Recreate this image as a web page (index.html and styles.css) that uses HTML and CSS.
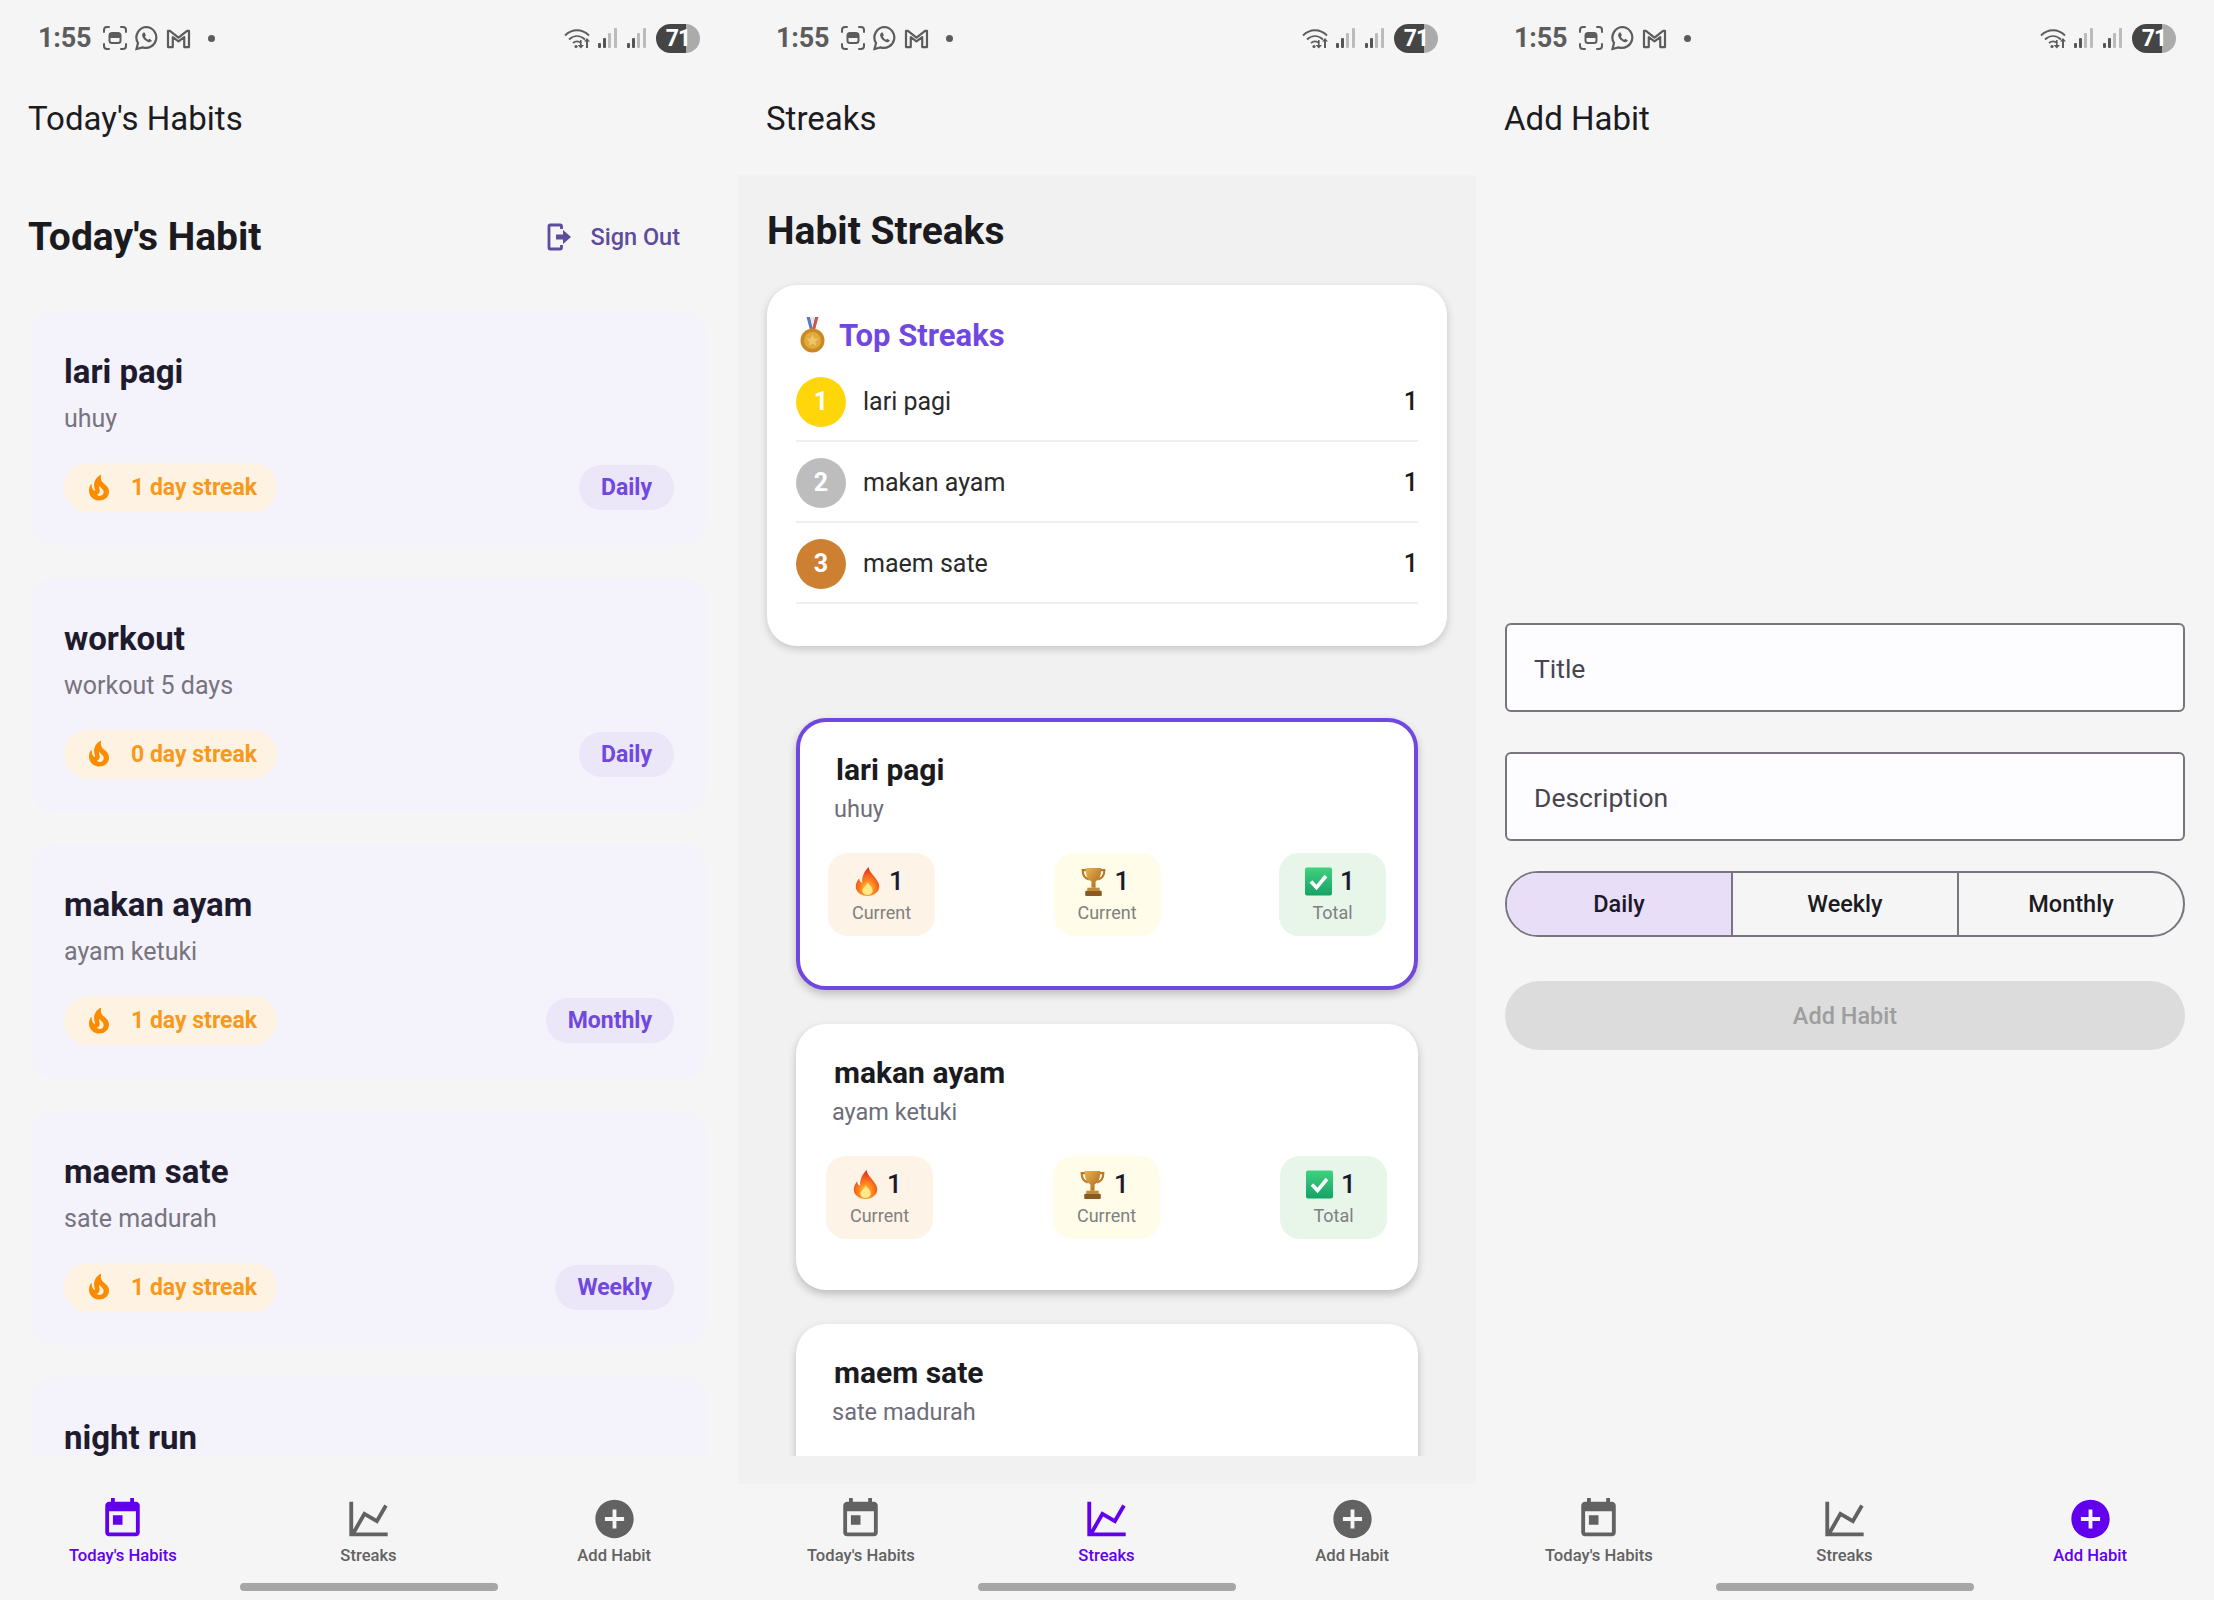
FILE: index.html
```html
<!DOCTYPE html>
<html lang="en">
<head>
<meta charset="utf-8">
<title>Habit tracker</title>
<link rel="stylesheet" href="styles.css">
</head>
<body>
<svg class="defs" width="0" height="0" aria-hidden="true">
  <defs>
    <radialGradient id="fireG" cx="50%" cy="75%" r="70%">
      <stop offset="0" stop-color="#ffd84a"/><stop offset=".4" stop-color="#ff8a1f"/><stop offset="1" stop-color="#e42f1e"/>
    </radialGradient>
    <linearGradient id="goldG" x1="0" x2="1" y1="0" y2="1">
      <stop offset="0" stop-color="#e9b44f"/><stop offset="1" stop-color="#a8641c"/>
    </linearGradient>
    <linearGradient id="checkG" x1="0" x2="0" y1="0" y2="1">
      <stop offset="0" stop-color="#3fd27f"/><stop offset="1" stop-color="#16a266"/>
    </linearGradient>
    <symbol id="i-today" viewBox="0 0 24 24"><path d="M19 3h-1V1h-2v2H8V1H6v2H5c-1.11 0-1.99.9-1.99 2L3 19c0 1.1.89 2 2 2h14c1.1 0 2-.9 2-2V5c0-1.1-.9-2-2-2zm0 16H5V8h14v11zM7 10h5v5H7z"/></symbol>
    <symbol id="i-chart" viewBox="0 0 24 24"><path d="M16 11.78 20.24 4.45 21.97 5.45 16.74 14.5 10.23 10.75 5.46 19H22V21H2V3H4V17.54L9.5 8 16 11.78Z"/></symbol>
    <symbol id="i-add" viewBox="0 0 24 24"><path d="M12 2C6.48 2 2 6.48 2 12s4.48 10 10 10 10-4.48 10-10S17.52 2 12 2zm5 11h-4v4h-2v-4H7v-2h4V7h2v4h4v2z"/></symbol>
    <symbol id="i-flame" viewBox="0 0 24 24"><path d="M19.48 12.35c-1.57-4.08-7.16-4.3-5.81-10.23.1-.44-.37-.78-.75-.55C9.29 3.71 6.68 8 8.87 13.62c.18.46-.36.89-.75.59-1.81-1.37-2-3.34-1.84-4.75.06-.52-.62-.77-.91-.34C4.69 10.16 4 11.84 4 14.37c.38 5.6 5.11 7.32 6.81 7.54 2.43.31 5.06-.14 6.95-1.87 2.08-1.93 2.84-5.01 1.72-7.69zM10.2 17.38c1.44-.35 2.18-1.39 2.38-2.31.33-1.43-.96-2.83-.09-5.09.33 1.87 3.27 3.04 3.27 5.08.08 2.53-2.66 4.7-5.56 2.32z"/></symbol>
    <symbol id="e-fire" viewBox="0 0 26 28"><path fill="url(#fireG)" d="M14 0c1 5 4 7 7 11 3 4 4 7 3 10-1 4-6 7-11 7S3 25 2 21c-1-4 1-8 3-10 0 2 1 4 3 4C7 10 10 4 14 0z"/><path fill="#ffe98a" d="M13 15c1 2 5 4 5 8 0 2-2 4-5 4s-5-2-5-4c0-3 4-4 5-8z"/></symbol>
    <symbol id="e-trophy" viewBox="0 0 24 28"><path fill="none" stroke="#b9772a" stroke-width="2" d="M5 3H1.5c0 5 2 8 6 9M19 3h3.5c0 5-2 8-6 9"/><path fill="url(#goldG)" d="M4.5 1h15c0 7-1.500 11-5.500 13v6h-4v-6C6 12 4.500 8 4.500 1z"/><rect x="6" y="20" width="12" height="3" fill="#c58a36"/><rect x="4" y="23" width="16" height="5" rx="1" fill="#8b5a20"/></symbol>
    <symbol id="e-check" viewBox="0 0 27 28"><rect width="27" height="28" rx="2" fill="url(#checkG)"/><path d="M6 14l5.500 6L21 8.500" fill="none" stroke="#fff" stroke-width="3.600"/></symbol>
    <symbol id="e-medal" viewBox="0 0 25 36"><path fill="#5a78c8" d="M6.500 0h3.500l3 13h-3z"/><path fill="#c9564f" d="M18.500 0H15l-3 13h3z"/><path fill="#e4e4ea" d="M10.500 0h4L12.500 9z"/><circle cx="12.500" cy="23.500" r="12" fill="#c98a25"/><circle cx="12.500" cy="23.500" r="8.500" fill="#e2a93d"/><path fill="#efc66b" d="M12.500 17.500l1.800 3.800 4.100.5-3 2.900.8 4.100-3.700-2-3.700 2 .8-4.100-3-2.900 4.100-.5z"/></symbol>
    <symbol id="s-shot" viewBox="0 0 24 24"><g fill="none" stroke="currentColor" stroke-width="2" stroke-linecap="round"><path d="M1 6V4a3 3 0 0 1 3-3h2M18 1h2a3 3 0 0 1 3 3v2M23 18v2a3 3 0 0 1-3 3h-2M6 23H4a3 3 0 0 1-3-3v-2"/><rect x="6.500" y="7" width="11" height="10" rx="2.500"/></g><path fill="currentColor" d="M7 7h10v5H7z"/></symbol>
    <symbol id="s-wa" viewBox="0 0 24 26"><path fill="none" stroke="currentColor" stroke-width="2.200" d="M12 2a10.500 10.500 0 0 0-9 16l-1.500 6 6-1.600A10.500 10.500 0 1 0 12 2z"/><path fill="currentColor" d="M8.500 7.500c-1.500 1-1.800 2.800-.9 4.500 1.200 2.400 3 4 5.300 4.900 1.800.6 3.300 0 4-1.500l-2.500-1.700-1.200 1c-1.500-.6-2.700-1.800-3.300-3.200l1-1.200-1.300-2.800z"/></symbol>
    <symbol id="s-gm" viewBox="0 0 26 22"><path fill="none" stroke="currentColor" stroke-width="2.300" stroke-linejoin="round" d="M2 3h2l9 7 9-7h2v17h-5V9.500l-6 4.500-6-4.500V20H2z"/></symbol>
    <symbol id="s-wifi" viewBox="0 0 28 21"><g fill="none" stroke="currentColor" stroke-width="1.800"><path d="M1 7.500C8 0.500 18 0.500 25 7.500M5 11.500C10 7 16 7 21 11.500M9 15c2.500-2 5.500-2 8 0"/></g><circle cx="12" cy="18.500" r="1.600" fill="currentColor"/><path fill="currentColor" d="M16 12h1.600v5H20l-3.200 3.600-3.200-3.600H16zM23 10l3 3.600h-2V20h-2v-6.400h-2z"/></symbol>
    <symbol id="s-sig" viewBox="0 0 19 20"><rect x="0" y="15" width="3" height="5" rx="1" fill="#555"/><rect x="5" y="10" width="3" height="10" rx="1" fill="#555"/><rect x="10" y="5" width="3" height="15" rx="1" fill="#bbb"/><rect x="16" y="0" width="3" height="20" rx="1" fill="#bbb"/></symbol>
  </defs>
</svg>

<main class="phones">

  <section class="phone">
    <header class="status">
      <span class="status-time">1:55</span>
      <svg class="s-ic s-shot"><use href="#s-shot"/></svg>
      <svg class="s-ic s-wa"><use href="#s-wa"/></svg>
      <svg class="s-ic s-gm"><use href="#s-gm"/></svg>
      <span class="status-dot"></span>
      <span class="status-space"></span>
      <svg class="s-ic s-wifi"><use href="#s-wifi"/></svg>
      <svg class="s-ic s-sig"><use href="#s-sig"/></svg>
      <svg class="s-ic s-sig"><use href="#s-sig"/></svg>
      <span class="battery"><span class="battery-num">71</span></span>
    </header>
    <div class="appbar">Today's Habits</div>
    <div class="content content-habits">
      <div class="heading-row">
        <h1 class="heading">Today's Habit</h1>
        <div class="signout">
          <svg class="signout-ic" viewBox="0 0 25 28"><path d="M14.500 6V3a1 1 0 0 0-1-1H3a1 1 0 0 0-1 1v22a1 1 0 0 0 1 1h10.500a1 1 0 0 0 1-1v-3" fill="none" stroke="currentColor" stroke-width="2.800"/><path d="M9 11.500h7V7l8 7-8 7v-4.500H9z" fill="currentColor"/></svg>
          <span>Sign Out</span>
        </div>
      </div>
      <div class="habit-list">
        <article class="habit">
          <div class="habit-title">lari pagi</div>
          <div class="habit-sub">uhuy</div>
          <div class="habit-foot">
            <span class="streak"><svg class="streak-ic"><use href="#i-flame"/></svg>1 day streak</span>
            <span class="freq">Daily</span>
          </div>
        </article>
        <article class="habit">
          <div class="habit-title">workout</div>
          <div class="habit-sub">workout 5 days</div>
          <div class="habit-foot">
            <span class="streak"><svg class="streak-ic"><use href="#i-flame"/></svg>0 day streak</span>
            <span class="freq">Daily</span>
          </div>
        </article>
        <article class="habit">
          <div class="habit-title">makan ayam</div>
          <div class="habit-sub">ayam ketuki</div>
          <div class="habit-foot">
            <span class="streak"><svg class="streak-ic"><use href="#i-flame"/></svg>1 day streak</span>
            <span class="freq">Monthly</span>
          </div>
        </article>
        <article class="habit">
          <div class="habit-title">maem sate</div>
          <div class="habit-sub">sate madurah</div>
          <div class="habit-foot">
            <span class="streak"><svg class="streak-ic"><use href="#i-flame"/></svg>1 day streak</span>
            <span class="freq">Weekly</span>
          </div>
        </article>
        <article class="habit">
          <div class="habit-title">night run</div>
        </article>
      </div>
    </div>
    <nav class="nav">
      <div class="tabs">
        <div class="tab tab-active"><svg class="tab-ic"><use href="#i-today"/></svg><span>Today's Habits</span></div>
        <div class="tab"><svg class="tab-ic"><use href="#i-chart"/></svg><span>Streaks</span></div>
        <div class="tab"><svg class="tab-ic"><use href="#i-add"/></svg><span>Add Habit</span></div>
      </div>
      <div class="homebar"></div>
    </nav>
  </section>

  <section class="phone">
    <header class="status">
      <span class="status-time">1:55</span>
      <svg class="s-ic s-shot"><use href="#s-shot"/></svg>
      <svg class="s-ic s-wa"><use href="#s-wa"/></svg>
      <svg class="s-ic s-gm"><use href="#s-gm"/></svg>
      <span class="status-dot"></span>
      <span class="status-space"></span>
      <svg class="s-ic s-wifi"><use href="#s-wifi"/></svg>
      <svg class="s-ic s-sig"><use href="#s-sig"/></svg>
      <svg class="s-ic s-sig"><use href="#s-sig"/></svg>
      <span class="battery"><span class="battery-num">71</span></span>
    </header>
    <div class="appbar">Streaks</div>
    <div class="content content-streaks">
      <h1 class="heading heading-streaks">Habit Streaks</h1>
      <div class="top-card">
        <div class="top-title"><svg class="medal"><use href="#e-medal"/></svg>Top Streaks</div>
        <div class="rank-row"><span class="rank rank-1">1</span><span class="rank-name">lari pagi</span><span class="rank-val">1</span></div>
        <div class="rank-row"><span class="rank rank-2">2</span><span class="rank-name">makan ayam</span><span class="rank-val">1</span></div>
        <div class="rank-row"><span class="rank rank-3">3</span><span class="rank-name">maem sate</span><span class="rank-val">1</span></div>
      </div>
      <div class="streak-list">
        <article class="scard scard-top">
          <div class="scard-title">lari pagi</div>
          <div class="scard-sub">uhuy</div>
          <div class="stats">
            <div class="stat stat-fire"><div class="stat-top"><svg class="emoji"><use href="#e-fire"/></svg>1</div><div class="stat-label">Current</div></div>
            <div class="stat stat-best"><div class="stat-top"><svg class="emoji"><use href="#e-trophy"/></svg>1</div><div class="stat-label">Current</div></div>
            <div class="stat stat-total"><div class="stat-top"><svg class="emoji"><use href="#e-check"/></svg>1</div><div class="stat-label">Total</div></div>
          </div>
        </article>
        <article class="scard">
          <div class="scard-title">makan ayam</div>
          <div class="scard-sub">ayam ketuki</div>
          <div class="stats">
            <div class="stat stat-fire"><div class="stat-top"><svg class="emoji"><use href="#e-fire"/></svg>1</div><div class="stat-label">Current</div></div>
            <div class="stat stat-best"><div class="stat-top"><svg class="emoji"><use href="#e-trophy"/></svg>1</div><div class="stat-label">Current</div></div>
            <div class="stat stat-total"><div class="stat-top"><svg class="emoji"><use href="#e-check"/></svg>1</div><div class="stat-label">Total</div></div>
          </div>
        </article>
        <article class="scard">
          <div class="scard-title">maem sate</div>
          <div class="scard-sub">sate madurah</div>
        </article>
      </div>
    </div>
    <nav class="nav">
      <div class="tabs">
        <div class="tab"><svg class="tab-ic"><use href="#i-today"/></svg><span>Today's Habits</span></div>
        <div class="tab tab-active"><svg class="tab-ic"><use href="#i-chart"/></svg><span>Streaks</span></div>
        <div class="tab"><svg class="tab-ic"><use href="#i-add"/></svg><span>Add Habit</span></div>
      </div>
      <div class="homebar"></div>
    </nav>
  </section>

  <section class="phone">
    <header class="status">
      <span class="status-time">1:55</span>
      <svg class="s-ic s-shot"><use href="#s-shot"/></svg>
      <svg class="s-ic s-wa"><use href="#s-wa"/></svg>
      <svg class="s-ic s-gm"><use href="#s-gm"/></svg>
      <span class="status-dot"></span>
      <span class="status-space"></span>
      <svg class="s-ic s-wifi"><use href="#s-wifi"/></svg>
      <svg class="s-ic s-sig"><use href="#s-sig"/></svg>
      <svg class="s-ic s-sig"><use href="#s-sig"/></svg>
      <span class="battery"><span class="battery-num">71</span></span>
    </header>
    <div class="appbar">Add Habit</div>
    <div class="content content-form">
      <div class="field">Title</div>
      <div class="field">Description</div>
      <div class="segments">
        <div class="segment segment-on">Daily</div>
        <div class="segment">Weekly</div>
        <div class="segment">Monthly</div>
      </div>
      <div class="submit">Add Habit</div>
    </div>
    <nav class="nav">
      <div class="tabs">
        <div class="tab"><svg class="tab-ic"><use href="#i-today"/></svg><span>Today's Habits</span></div>
        <div class="tab"><svg class="tab-ic"><use href="#i-chart"/></svg><span>Streaks</span></div>
        <div class="tab tab-active"><svg class="tab-ic"><use href="#i-add"/></svg><span>Add Habit</span></div>
      </div>
      <div class="homebar"></div>
    </nav>
  </section>

</main>
</body>
</html>
```

FILE: styles.css
```css
* { box-sizing: border-box; }
html, body { margin: 0; height: 100%; overflow: hidden; }
body { background: #f5f5f5; font-family: Roboto, "Liberation Sans", sans-serif; color: #1c1b1f; }
.defs { position: absolute; }

.phones { display: flex; height: 1600px; width: 2214px; }
.phone { width: 738px; height: 1600px; display: flex; flex-direction: column; background: #f5f5f5; }

/* status bar */
.status { height: 76px; flex: none; display: flex; align-items: center; padding: 0 38px; color: #5c5c5c; }
.status-time { font-size: 27px; font-weight: 700; letter-spacing: -.2px; margin-right: 12px; }
.s-ic { display: block; flex: none; }
.s-shot { width: 24px; height: 24px; margin-right: 8px; }
.s-wa { width: 24px; height: 26px; margin-right: 7px; }
.s-gm { width: 25px; height: 21px; margin-right: 17px; }
.status-dot { width: 7px; height: 7px; border-radius: 50%; background: #5c5c5c; }
.status-space { flex: 1; }
.s-wifi { width: 28px; height: 21px; margin-right: 6px; }
.s-sig { width: 19px; height: 20px; margin-right: 10px; }
.battery { width: 44px; height: 29px; border-radius: 15px; background: linear-gradient(90deg, #454545 0 68%, #ababab 68% 100%); display: flex; align-items: center; justify-content: center; }
.battery-num { color: #fff; font-size: 23px; font-weight: 700; letter-spacing: -1px; }

.appbar { height: 99px; flex: none; padding: 24px 28px 0; font-size: 33px; line-height: 38px; color: #1c1b1f; }

.content { flex: 1; min-height: 0; display: flex; flex-direction: column; }

/* today */
.content-habits { padding: 32px 0 28px; }
.heading-row { display: flex; align-items: center; justify-content: space-between; padding: 0 58px 0 28px; margin-bottom: 44px; }
.heading { margin: 0; font-size: 39px; line-height: 60px; font-weight: 700; color: #1a1a1f; }
.signout { display: flex; align-items: center; gap: 18px; color: #5f4b9b; font-size: 23.500px; font-weight: 500; }
.signout-ic { width: 25px; height: 28px; display: block; }
.habit-list { flex: 1; min-height: 0; overflow: hidden; display: flex; flex-direction: column; gap: 32.500px; padding: 0 32px 0 31px; }
.habit { flex: none; height: 234px; border-radius: 22px; background: #f4f2fa; padding: 39px 32px 34px 33px; }
.habit-title { font-size: 33px; line-height: 44px; font-weight: 700; color: #1e1b2e; }
.habit-sub { font-size: 25px; line-height: 34px; margin-top: 8px; color: #77747f; }
.habit-foot { display: flex; align-items: center; justify-content: space-between; margin-top: 27px; }
.streak { display: flex; align-items: center; height: 49px; width: 213px; padding-left: 20px; border-radius: 25px; background: #fef3e2; color: #f7991d; font-size: 23px; font-weight: 700; }
.streak-ic { width: 30px; height: 30px; fill: #fb8c00; margin-right: 17px; }
.freq { height: 45px; display: flex; align-items: center; padding: 0 22px; border-radius: 23px; background: #ebe6f8; color: #7048e0; font-size: 23px; font-weight: 700; }

/* streaks */
.content-streaks { background: #f1f1f1; padding: 26px 29px 28px; }
.heading-streaks { margin-bottom: 24px; }
.top-card { flex: none; height: 361px; background: #fff; border-radius: 30px; padding: 28px 29px 0 29px; box-shadow: 0 3px 8px rgba(0,0,0,.18); }
.top-title { display: flex; align-items: center; height: 44px; color: #7048e0; font-size: 31px; font-weight: 700; }
.medal { width: 25px; height: 36px; margin: 0 14px 0 4px; }
.rank-row { display: flex; align-items: center; height: 81px; border-bottom: 2px solid #efefef; padding-top: 2px; }
.top-title + .rank-row { margin-top: 4px; }
.rank { width: 50px; height: 50px; border-radius: 50%; display: flex; align-items: center; justify-content: center; color: #fff; font-size: 25px; font-weight: 700; }
.rank-1 { background: #ffd60a; }
.rank-2 { background: #bdbdbd; }
.rank-3 { background: #cd7f32; }
.rank-name { flex: 1; margin-left: 17px; font-size: 25px; color: #2a2a2a; }
.rank-val { font-size: 25px; font-weight: 500; color: #1a1a1a; }

.streak-list { flex: 1; min-height: 0; overflow: hidden; margin: 0 -10px; padding: 72px 39px 0 39px; display: flex; flex-direction: column; gap: 34px; }
.scard { flex: none; height: 266px; background: #fff; border-radius: 30px; padding: 29px 31px 0 30px; box-shadow: 0 4px 9px rgba(0,0,0,.22); }
.scard-top { height: 272px; border: 4px solid #7048e0; padding: 28px 28px 0 28px; }
.scard-title { font-size: 30px; line-height: 40px; font-weight: 700; color: #1a1a1f; padding-left: 8px; }
.scard-sub { font-size: 23.500px; line-height: 38px; color: #6d6d7a; padding-left: 6px; }
.stats { display: flex; justify-content: space-between; margin-top: 25px; }
.stat { width: 107px; height: 83px; padding-top: 2px; border-radius: 20px; display: flex; flex-direction: column; align-items: center; justify-content: center; }
.stat-fire { background: #fdf3e6; }
.stat-best { background: #fffde9; }
.stat-total { background: #e8f5e9; }
.stat-top { display: flex; align-items: center; gap: 8px; height: 30px; font-size: 26px; font-weight: 500; color: #1a1a2e; padding-right: 5px; }
.emoji { width: 27px; height: 29px; }
.stat-label { font-size: 18px; line-height: 24px; margin-top: 5px; color: #808080; }

/* add form */
.content-form { padding: 14px 29px 0; justify-content: center; }
.field { height: 89px; display: flex; align-items: center; padding: 2px 27px 0; background: #fdfcff; border: 2px solid #79747e; border-radius: 6px; font-size: 26.500px; color: #49454f; }
.field + .field { margin-top: 40px; }
.segments { display: flex; height: 66px; margin-top: 30px; border: 2px solid #79747e; border-radius: 33px; overflow: hidden; }
.segment { flex: 1; display: flex; align-items: center; justify-content: center; font-size: 23.500px; font-weight: 500; color: #1c1b1f; }
.segment + .segment { border-left: 2px solid #79747e; }
.segment-on { background: #e8def8; color: #1d192b; }
.submit { height: 69px; margin-top: 44px; border-radius: 35px; background: #dcdcdc; color: #9e9e9e; display: flex; align-items: center; justify-content: center; font-size: 23.500px; font-weight: 500; }

/* nav */
.nav { flex: none; height: 116px; padding-top: 12px; }
.tabs { display: flex; padding-right: 1px; }
.tab { flex: 1; display: flex; flex-direction: column; align-items: center; color: #626262; font-size: 16.600px; font-weight: 500; line-height: 20px; }
.tab-ic { width: 47px; height: 46px; fill: currentColor; margin-bottom: 4px; }
.tab-active { color: #6200ee; }
.homebar { width: 258px; height: 8px; margin: 17px auto 0; border-radius: 4px; background: #a6a6a6; }
```
